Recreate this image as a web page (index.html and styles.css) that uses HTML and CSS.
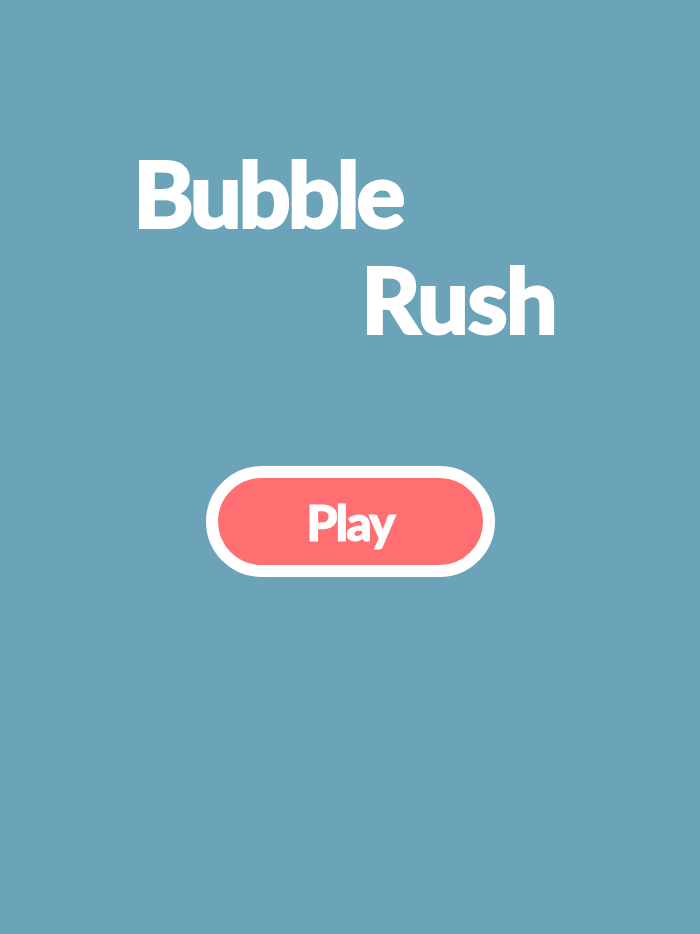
FILE: index.html
```html
<!DOCTYPE html>
<html lang="en">
<head>
<meta charset="utf-8">
<title>Bubble Rush</title>
<link rel="stylesheet" href="styles.css">
</head>
<body>
<main class="screen">
  <h1 class="title">
    <span class="title-line title-line--first">Bubble</span>
    <span class="title-line title-line--second">Rush</span>
  </h1>
  <button class="play-button" type="button">Play</button>
</main>
</body>
</html>
```
FILE: styles.css
```css
html, body {
  margin: 0;
  padding: 0;
  height: 100%;
}

body {
  background: #6ba3b9;
  font-family: "Lato", "DejaVu Sans", sans-serif;
  color: #ffffff;
}

.screen {
  display: flex;
  flex-direction: column;
  align-items: center;
  padding-top: 140px;
}

.title {
  margin: 0;
  width: 434px;
  display: flex;
  flex-direction: column;
  font-size: 92px;
  font-weight: 900;
  line-height: 106px;
  letter-spacing: -3.5px;
  -webkit-text-stroke: 2px #ffffff;
}

.title-line--first {
  align-self: flex-start;
}

.title-line--second {
  align-self: flex-end;
  margin-right: 11px;
  letter-spacing: -2px;
}

.play-button {
  margin-top: 114px;
  width: 289px;
  height: 111px;
  box-sizing: border-box;
  border: 12px solid #ffffff;
  border-radius: 56px;
  background: #ff6e70;
  color: #ffffff;
  font-family: "Lato", "DejaVu Sans", sans-serif;
  font-weight: 900;
  font-size: 50px;
  letter-spacing: -2px;
  -webkit-text-stroke: 1px #ffffff;
  padding: 0;
  cursor: pointer;
}
```
